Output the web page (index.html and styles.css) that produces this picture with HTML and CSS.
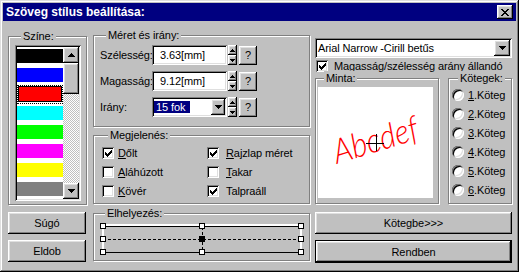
FILE: index.html
```html
<!DOCTYPE html>
<html lang="hu">
<head>
  <meta charset="UTF-8">
  <meta name="viewport" content="width=device-width, initial-scale=1.0">
  <link rel="stylesheet" href="styles.css">
  <title>Szöveg stílus beállítása</title>
</head>
<body>
  <div class="window">
    <div class="titlebar">
      <span class="title">Szöveg stílus beállítása:</span>
      <button class="btn close-btn">
        <svg width="8" height="7" viewBox="0 0 8 7" shape-rendering="crispEdges"><path d="M0 0h2v1H0z M6 0h2v1H6z M1 1h2v1H1z M5 1h2v1H5z M2 2h4v1H2z M3 3h2v1H3z M2 4h4v1H2z M1 5h2v1H1z M5 5h2v1H5z M0 6h2v1H0z M6 6h2v1H6z"/></svg>
      </button>
    </div>

    <div class="dialog">
      <!-- bal oszlop: szín lista + gombok -->
      <div class="col col-left">
        <div class="group color-group">
          <div class="group-title">Színe:</div>
          <div class="listbox sunken">
            <ul class="swatches">
              <li class="swatch-item"><span class="swatch sw-black"></span></li>
              <li class="swatch-item"><span class="swatch sw-blue"></span></li>
              <li class="swatch-item selected"><span class="swatch sw-red"></span></li>
              <li class="swatch-item"><span class="swatch sw-cyan"></span></li>
              <li class="swatch-item"><span class="swatch sw-green"></span></li>
              <li class="swatch-item"><span class="swatch sw-magenta"></span></li>
              <li class="swatch-item"><span class="swatch sw-yellow"></span></li>
              <li class="swatch-item"><span class="swatch sw-gray"></span></li>
            </ul>
            <div class="vscroll">
              <span class="btn sb-btn"><svg width="7" height="4" viewBox="0 0 7 4" shape-rendering="crispEdges"><path d="M3 0h1v1h1v1h1v1h1v1H0V3h1V2h1V1h1z"/></svg></span>
              <span class="btn sb-thumb"></span>
              <span class="sb-track"></span>
              <span class="btn sb-btn"><svg width="7" height="4" viewBox="0 0 7 4" shape-rendering="crispEdges"><path d="M0 0h7v1H6v1H5v1H4v1H3V3H2V2H1V1H0z"/></svg></span>
            </div>
          </div>
        </div>
        <button class="btn side-btn first">Súgó</button>
        <button class="btn side-btn">Eldob</button>
      </div>

      <!-- középső oszlop -->
      <div class="col col-mid">
        <div class="group size-group">
          <div class="group-title">Méret és irány:</div>
          <div class="field-row first">
            <span class="field-label">Szélesség:</span>
            <span class="field sunken">3.63[mm]</span>
            <span class="spin">
              <span class="btn spin-half"><svg width="5" height="3" viewBox="0 0 5 3" shape-rendering="crispEdges"><path d="M2 0h1v1h1v1h1v1H0V2h1V1h1z"/></svg></span>
              <span class="btn spin-half"><svg width="5" height="3" viewBox="0 0 5 3" shape-rendering="crispEdges"><path d="M0 0h5v1H4v1H3v1H2V2H1V1H0z"/></svg></span>
            </span>
            <button class="btn help-btn">?</button>
          </div>
          <div class="field-row">
            <span class="field-label">Magasság:</span>
            <span class="field sunken">9.12[mm]</span>
            <span class="spin">
              <span class="btn spin-half"><svg width="5" height="3" viewBox="0 0 5 3" shape-rendering="crispEdges"><path d="M2 0h1v1h1v1h1v1H0V2h1V1h1z"/></svg></span>
              <span class="btn spin-half"><svg width="5" height="3" viewBox="0 0 5 3" shape-rendering="crispEdges"><path d="M0 0h5v1H4v1H3v1H2V2H1V1H0z"/></svg></span>
            </span>
            <button class="btn help-btn">?</button>
          </div>
          <div class="field-row">
            <span class="field-label">Irány:</span>
            <span class="field combo small-combo sunken">
              <span class="combo-text"><span class="selection">15 fok</span></span>
              <span class="btn combo-btn"><svg width="7" height="4" viewBox="0 0 7 4" shape-rendering="crispEdges"><path d="M0 0h7v1H6v1H5v1H4v1H3V3H2V2H1V1H0z"/></svg></span>
            </span>
            <span class="spin">
              <span class="btn spin-half"><svg width="5" height="3" viewBox="0 0 5 3" shape-rendering="crispEdges"><path d="M2 0h1v1h1v1h1v1H0V2h1V1h1z"/></svg></span>
              <span class="btn spin-half"><svg width="5" height="3" viewBox="0 0 5 3" shape-rendering="crispEdges"><path d="M0 0h5v1H4v1H3v1H2V2H1V1H0z"/></svg></span>
            </span>
            <button class="btn help-btn">?</button>
          </div>
        </div>

        <div class="group look-group">
          <div class="group-title">Megjelenés:</div>
          <div class="check-grid">
            <label class="check-row"><span class="checkbox checked"><svg width="7" height="7" viewBox="0 0 7 7" shape-rendering="crispEdges"><path d="M0 2h1v3H0z M1 3h1v3H1z M2 4h1v3H2z M3 3h1v3H3z M4 2h1v3H4z M5 1h1v3H5z M6 0h1v3H6z"/></svg></span><span><u>D</u>őlt</span></label>
            <label class="check-row wide"><span class="checkbox checked"><svg width="7" height="7" viewBox="0 0 7 7" shape-rendering="crispEdges"><path d="M0 2h1v3H0z M1 3h1v3H1z M2 4h1v3H2z M3 3h1v3H3z M4 2h1v3H4z M5 1h1v3H5z M6 0h1v3H6z"/></svg></span><span><u>R</u>ajzlap méret</span></label>
            <label class="check-row"><span class="checkbox"></span><span><u>A</u>láhúzott</span></label>
            <label class="check-row wide"><span class="checkbox"></span><span><u>T</u>akar</span></label>
            <label class="check-row"><span class="checkbox"></span><span><u>K</u>övér</span></label>
            <label class="check-row wide"><span class="checkbox checked"><svg width="7" height="7" viewBox="0 0 7 7" shape-rendering="crispEdges"><path d="M0 2h1v3H0z M1 3h1v3H1z M2 4h1v3H2z M3 3h1v3H3z M4 2h1v3H4z M5 1h1v3H5z M6 0h1v3H6z"/></svg></span><span>Talpraáll</span></label>
          </div>
        </div>

        <div class="group place-group">
          <div class="group-title">Elhelyezés:</div>
          <svg class="placement" width="208" height="36" viewBox="99 221 208 36" shape-rendering="crispEdges">
            <rect x="102" y="225" width="200" height="2" fill="#fff"/>
            <rect x="102" y="227" width="2" height="26" fill="#fff"/>
            <rect x="300" y="227" width="2" height="26" fill="#fff"/>
            <rect x="103" y="227" width="198" height="1" fill="#000"/>
            <rect x="103" y="253" width="198" height="1" fill="#000"/>
            <line x1="103" y1="240.5" x2="301" y2="240.5" stroke="#000" stroke-dasharray="3 2"/>
            <line x1="202.5" y1="228" x2="202.5" y2="253" stroke="#000" stroke-dasharray="3 2"/>
            <g fill="#fff" stroke="#000">
              <rect x="100.5" y="224.5" width="5" height="5"/>
              <rect x="199.5" y="224.5" width="5" height="5"/>
              <rect x="298.5" y="224.5" width="5" height="5"/>
              <rect x="100.5" y="237.5" width="5" height="5"/>
              <rect x="199.5" y="237.5" width="5" height="5" fill="#000"/>
              <rect x="298.5" y="237.5" width="5" height="5"/>
              <rect x="100.5" y="250.5" width="5" height="5"/>
              <rect x="199.5" y="250.5" width="5" height="5"/>
              <rect x="298.5" y="250.5" width="5" height="5"/>
            </g>
          </svg>
        </div>
      </div>

      <!-- jobb oszlop -->
      <div class="col col-right">
        <div class="field combo font-combo sunken">
          <span class="combo-text">Arial Narrow -Cirill betűs</span>
          <span class="btn combo-btn"><svg width="7" height="4" viewBox="0 0 7 4" shape-rendering="crispEdges"><path d="M0 0h7v1H6v1H5v1H4v1H3V3H2V2H1V1H0z"/></svg></span>
        </div>
        <label class="check-row ratio-row"><span class="checkbox checked"><svg width="7" height="7" viewBox="0 0 7 7" shape-rendering="crispEdges"><path d="M0 2h1v3H0z M1 3h1v3H1z M2 4h1v3H2z M3 3h1v3H3z M4 2h1v3H4z M5 1h1v3H5z M6 0h1v3H6z"/></svg></span><span>Magasság/szélesség arány állandó</span></label>

        <div class="preview-row">
          <div class="group sample-group">
            <div class="group-title">Minta:</div>
            <div class="sample">
              <svg width="115" height="111" viewBox="0 0 115 111">
                <text class="sample-text" transform="translate(19 77) rotate(-17) scale(0.9 1)">Abcdef</text>
                <g stroke="#000" shape-rendering="crispEdges">
                  <line x1="48" y1="56.5" x2="66" y2="56.5"/>
                  <line x1="58.5" y1="47" x2="58.5" y2="64"/>
                </g>
              </svg>
            </div>
          </div>
          <div class="group batch-group">
            <div class="group-title">Kötegek:</div>
            <ul class="radios">
              <li class="radio-row"><span class="radio"></span><span><u>1</u>.Köteg</span></li>
              <li class="radio-row"><span class="radio"></span><span><u>2</u>.Köteg</span></li>
              <li class="radio-row"><span class="radio"></span><span><u>3</u>.Köteg</span></li>
              <li class="radio-row"><span class="radio"></span><span><u>4</u>.Köteg</span></li>
              <li class="radio-row"><span class="radio"></span><span><u>5</u>.Köteg</span></li>
              <li class="radio-row"><span class="radio"></span><span><u>6</u>.Köteg</span></li>
            </ul>
          </div>
        </div>

        <button class="btn wide-btn batch-btn">Kötegbe&gt;&gt;&gt;</button>
        <button class="btn wide-btn btn-default">Rendben</button>
      </div>
    </div>
  </div>
</body>
</html>
```

FILE: styles.css
```css
* {
  box-sizing: border-box;
}

body {
  margin: 0;
  background-color: #c0c0c0;
  font-family: "Liberation Sans", Arial, sans-serif;
  font-size: 11px;
  letter-spacing: -0.1px;
  color: #000;
}

ul {
  list-style: none;
  margin: 0;
  padding: 0;
}

u {
  text-decoration-thickness: 1px;
  text-underline-offset: 1px;
}

.window {
  width: 519px;
  height: 272px;
  padding: 3px;
  background-color: #c0c0c0;
  box-shadow: inset -1px -1px #000, inset 1px 1px #dfdfdf, inset -2px -2px #808080, inset 2px 2px #fff;
}

/* 3D elemek */
.btn {
  display: flex;
  align-items: center;
  justify-content: center;
  margin: 0;
  padding: 0;
  border: none;
  background-color: #c0c0c0;
  color: #000;
  font: inherit;
  letter-spacing: inherit;
  box-shadow: inset -1px -1px #000, inset 1px 1px #fff, inset -2px -2px #808080, inset 2px 2px #dfdfdf;
}

.btn-default {
  box-shadow: inset 0 0 0 1px #000, inset -2px -2px #000, inset 2px 2px #fff, inset -3px -3px #808080, inset 3px 3px #dfdfdf;
}

.sunken {
  background-color: #fff;
  box-shadow: inset 1px 1px #808080, inset -1px -1px #fff, inset 2px 2px #000, inset -2px -2px #dfdfdf;
}

/* címsor */
.titlebar {
  height: 18px;
  padding: 0 3px;
  display: flex;
  align-items: center;
  justify-content: space-between;
  background-color: #000080;
}

.title {
  color: #fff;
  font: bold 12px "Liberation Sans", Arial, sans-serif;
  letter-spacing: 0;
}

.close-btn {
  width: 16px;
  height: 14px;
  padding-top: 1px;
}

/* elrendezés */
.dialog {
  display: flex;
  padding: 14px 0 0 5px;
}

.col {
  display: flex;
  flex-direction: column;
}

.col-left {
  width: 79px;
  margin-right: 6px;
}

.col-mid {
  width: 217px;
  margin-right: 5px;
}

.col-right {
  width: 197px;
}

/* csoport keret */
.group {
  border: 1px solid #808080;
  box-shadow: inset 1px 1px #fff, 1px 1px #fff;
}

.group-title {
  width: fit-content;
  margin: -8px 0 0 6px;
  padding: 0 2px;
  line-height: 14px;
  background-color: #c0c0c0;
}

/* szín lista */
.color-group {
  height: 169px;
  margin-top: 1px;
  padding-left: 6px;
}

.listbox {
  width: 66px;
  height: 156px;
  margin-top: 2px;
  padding: 2px;
  display: flex;
}

.swatches {
  width: 46px;
}

.swatch-item {
  height: 19px;
  padding: 2px 0 3px;
}

.swatch {
  display: block;
  height: 14px;
}

.swatch-item.selected {
  outline: 1px dotted #000;
  outline-offset: -1px;
}

.swatch-item.selected .swatch {
  margin: 0 2px;
  box-shadow: 0 0 0 1px #000;
}

.sw-black { background-color: #000; }
.sw-blue { background-color: #0000ff; }
.sw-red { background-color: #ff0000; }
.sw-cyan { background-color: #00ffff; }
.sw-green { background-color: #00ff00; }
.sw-magenta { background-color: #ff00ff; }
.sw-yellow { background-color: #ffff00; }
.sw-gray { background-color: #808080; }

.vscroll {
  width: 16px;
  display: flex;
  flex-direction: column;
}

.sb-btn {
  height: 16px;
  flex: none;
}

.sb-thumb {
  height: 31px;
  flex: none;
}

.sb-track {
  flex: 1;
  background: repeating-conic-gradient(#c0c0c0 0 25%, #fff 0 50%) 0 0 / 2px 2px;
}

.side-btn {
  width: 78px;
  height: 22px;
  margin-top: 6px;
}

.side-btn.first {
  margin-top: 7px;
}

/* méret és irány */
.size-group {
  height: 92px;
  padding-left: 6px;
}

.field-row {
  display: flex;
  align-items: center;
  height: 20px;
  margin-top: 6px;
}

.field-row.first {
  margin-top: 3px;
}

.field-label {
  width: 52px;
  white-space: nowrap;
}

.field {
  display: flex;
  align-items: center;
  width: 75px;
  height: 20px;
  padding-left: 8px;
}

.spin {
  display: flex;
  flex-direction: column;
  width: 9px;
  height: 20px;
  margin-left: 1px;
}

.spin-half {
  flex: 1;
}

.help-btn {
  width: 18px;
  height: 19px;
  margin-left: 2px;
}

.combo {
  padding: 2px;
}

.combo-text {
  flex: 1;
  padding-left: 1px;
  white-space: nowrap;
  overflow: hidden;
}

.small-combo .combo-text {
  padding-left: 0;
}

.selection {
  padding: 1px 5px 1px 2px;
  background-color: #000080;
  color: #fff;
}

.combo-btn {
  width: 16px;
  height: 16px;
  flex: none;
}

.small-combo .combo-btn {
  width: 14px;
}

/* megjelenés */
.look-group {
  height: 69px;
  margin-top: 8px;
  padding-left: 8px;
}

.check-grid {
  display: grid;
  grid-template-columns: 105px 1fr;
  grid-auto-rows: 19px;
  margin-top: 1px;
}

.check-row {
  display: flex;
  align-items: center;
  gap: 4px;
  white-space: nowrap;
}

.check-row.wide {
  gap: 7px;
}

.checkbox {
  width: 12px;
  height: 12px;
  flex: none;
  padding: 3px 0 0 3px;
  background-color: #fff;
  box-shadow: inset 1px 1px #808080, inset -1px -1px #fff, inset 2px 2px #000, inset -2px -2px #dfdfdf;
}

.checkbox svg {
  display: block;
}

/* elhelyezés */
.place-group {
  height: 48px;
  margin-top: 9px;
  padding-left: 5px;
}

.placement {
  display: block;
}

/* jobb oldal */
.font-combo {
  width: 197px;
  height: 20px;
  margin-top: 3px;
  padding-left: 2px;
}

.ratio-row {
  height: 12px;
  margin: 2px 0 0 1px;
  gap: 6px;
}

.preview-row {
  display: flex;
  justify-content: space-between;
  margin-top: 6px;
}

.sample-group {
  width: 124px;
  height: 126px;
  padding-left: 2px;
}

.sample {
  width: 115px;
  height: 111px;
  margin-top: 2px;
  background-color: #fff;
}

.sample svg {
  display: block;
}

.sample-text {
  fill: #ff0000;
  font-family: Lato, "Liberation Sans", sans-serif;
  font-style: italic;
  font-weight: 300;
  font-size: 34px;
  letter-spacing: 0;
}

.batch-group {
  width: 64px;
  height: 126px;
  padding-left: 3px;
}

.radio-row {
  display: flex;
  align-items: center;
  gap: 4px;
  height: 19px;
}

.radio {
  width: 12px;
  height: 12px;
  flex: none;
  border-radius: 50%;
  background-color: #fff;
  box-shadow: inset 1px 1px #808080, inset -1px -1px #fff, inset 2px 2px #000, inset -2px -2px #dfdfdf;
}

.wide-btn {
  width: 197px;
  height: 22px;
  margin-top: 6px;
}

.batch-btn {
  margin-top: 8px;
}

.btn-default {
  height: 23px;
}
```
